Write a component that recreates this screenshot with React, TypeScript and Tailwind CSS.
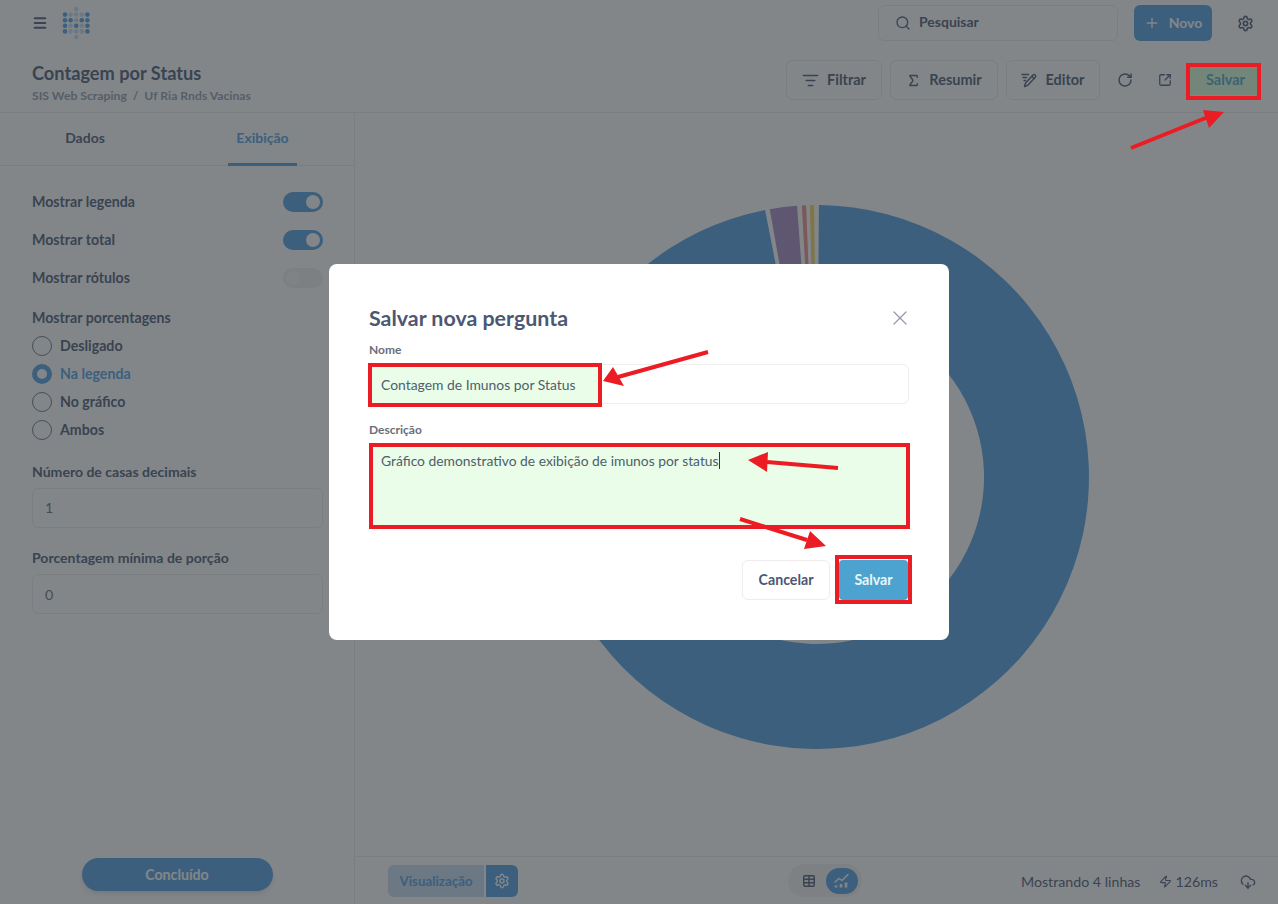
import { CloudDownload, ListFilter, Menu, Plus, RotateCw, Search, Settings, Sigma, SquareArrowOutUpRight, Table, X, Zap } from 'lucide-react';

const LOGO_DOTS = [
  '..o..',
  '#ooo#',
  '##o##',
  '#o#o#',
  '#ooo#',
  '..o..',
];

function Logo() {
  return (
    <svg width="28" height="34" viewBox="0 0 28 34">
      {LOGO_DOTS.map((row, y) =>
        row.split('').map((c, x) =>
          c === '.' ? null : (
            <circle key={`${x}-${y}`} cx={3 + x * 5.6} cy={3 + y * 5.6} r="2.3" fill={c === '#' ? '#509ee3' : '#c9dff3'} />
          )
        )
      )}
    </svg>
  );
}

function EditorIcon() {
  return (
    <svg width="16" height="16" viewBox="0 0 16 16" fill="none" stroke="currentColor" strokeWidth="1.4" strokeLinecap="round" strokeLinejoin="round">
      <path d="M1 2.5h6.5M2 5.5h3.5M3 8.5h1.5" />
      <path d="M3.5 14.5l1-3.5 7.5-8a1.6 1.6 0 0 1 2.3 2.2l-7.5 8z" />
      <path d="M10.8 4.3l2.2 2.2" />
    </svg>
  );
}

function ChartIcon() {
  return (
    <svg width="16" height="16" viewBox="0 0 16 16" fill="none" stroke="currentColor">
      <path d="M1 9l4-3.5 3 2 6-6" strokeWidth="1.5" strokeLinecap="round" strokeLinejoin="round" />
      <path d="M2 14.5v-2M7 14.5v-3.5M12 14.5v-5" strokeWidth="2.6" />
    </svg>
  );
}

// anel do donut, angulos em graus a partir do topo
function sector(a0: number, a1: number, r0: number, r1: number) {
  const pt = (a: number, r: number) => {
    const t = (a * Math.PI) / 180;
    return `${(r * Math.sin(t)).toFixed(2)} ${(-r * Math.cos(t)).toFixed(2)}`;
  };
  const large = a1 - a0 > 180 ? 1 : 0;
  return `M${pt(a0, r1)}A${r1} ${r1} 0 ${large} 1 ${pt(a1, r1)}L${pt(a1, r0)}A${r0} ${r0} 0 ${large} 0 ${pt(a0, r0)}Z`;
}

function Donut() {
  return (
    <svg width="546" height="546" viewBox="-273 -273 546 546">
      <path d={sector(0.4, 349, 167, 272)} fill="#509ee3" />
      <path d={sector(350, 355.8, 167, 272)} fill="#a989c5" />
      <path d={sector(356.8, 357.7, 167, 272)} fill="#ef8c8c" />
      <path d={sector(358.5, 359.4, 167, 272)} fill="#f9d45c" />
    </svg>
  );
}

function Toggle({ on }: { on: boolean }) {
  return (
    <div className={`flex items-center w-10 h-5 rounded-full px-[3px] ${on ? 'bg-[#509ee3] justify-end' : 'bg-[#f0f0f0] justify-start'}`}>
      <div className={`w-[14px] h-[14px] rounded-full ${on ? 'bg-white' : 'bg-[#f7f7f7]'}`} />
    </div>
  );
}

function Radio({ label, checked }: { label: string; checked?: boolean }) {
  return (
    <div className="flex items-center h-7 gap-2">
      <div className={`w-5 h-5 rounded-full bg-white ${checked ? 'border-[5px] border-[#509ee3]' : 'border border-[#6b7285]'}`} />
      <span className={`text-[14.2px] font-bold ${checked ? 'text-[#509ee3]' : 'text-[#4c5773]'}`}>{label}</span>
    </div>
  );
}

function ToolButton({ icon, label, width }: { icon: React.ReactNode; label: string; width: string }) {
  return (
    <button className={`flex items-center justify-center gap-2 h-10 border border-[#eeecec] rounded-md text-[14.5px] font-bold text-[#4c5773] ${width}`}>
      {icon}
      {label}
    </button>
  );
}

function Arrow({ tail, neck, wingA, tip, wingB }: { tail: string; neck: string; wingA: string; tip: string; wingB: string }) {
  return (
    <>
      <polyline points={`${tail} ${neck}`} stroke="#ec1c24" strokeWidth="4" fill="none" />
      <polygon points={`${wingA} ${tip} ${wingB}`} fill="#ec1c24" />
    </>
  );
}

export default function App() {
  return (
    <div className="relative w-[1278px] h-[904px] overflow-hidden bg-white font-['Lato',sans-serif] text-[#4c5773]">
      {/* pagina por baixo do modal */}
      <div className="flex flex-col h-full">
        <div className="flex items-center h-[46px] shrink-0 pl-8 pr-[24px]">
          <Menu size={16} strokeWidth={3} />
          <div className="ml-[14px]">
            <Logo />
          </div>
          <div className="ml-auto flex items-center w-[240px] h-9 border border-[#eeecec] rounded-md pl-4 gap-2 text-sm font-bold">
            <Search size={16} />
            <span className="-mt-[2px]">Pesquisar</span>
          </div>
          <div className="ml-4 flex items-center justify-center gap-[9px] w-[78px] h-9 rounded-md bg-[#509ee3] text-white text-sm font-bold">
            <Plus size={16} />
            Novo
          </div>
          <div className="ml-[25px]">
            <Settings size={17} strokeWidth={2.3} />
          </div>
        </div>

        <div className="flex items-start h-[67px] shrink-0 border-b border-[#eeecec] pl-8 pr-[21px]">
          <div className="pt-[15px]">
            <div className="text-[18.2px] leading-6 font-bold">Contagem por Status</div>
            <div className="mt-[3px] text-[12.2px] leading-4 font-bold text-[#949aab]">SIS Web Scraping&nbsp; /&nbsp; Uf Ria Rnds Vacinas</div>
          </div>
          <div className="ml-auto flex items-center pt-[14px]">
            <ToolButton icon={<ListFilter size={17} strokeWidth={2.2} />} label="Filtrar" width="w-[96px]" />
            <div className="w-2" />
            <ToolButton icon={<Sigma size={15} strokeWidth={2.2} />} label="Resumir" width="w-[108px]" />
            <div className="w-2" />
            <ToolButton icon={<EditorIcon />} label="Editor" width="w-[94px]" />
            <div className="ml-[17px]">
              <RotateCw size={16} strokeWidth={2.2} />
            </div>
            <div className="ml-[25px]">
              <SquareArrowOutUpRight size={14} strokeWidth={2.2} />
            </div>
            <div className="ml-[18px] flex items-center justify-center w-[67px] h-[30px] pl-1 bg-[#dcffd8] text-[14.5px] font-bold text-[#4fa8c8]">Salvar</div>
          </div>
        </div>

        <div className="flex flex-1 min-h-0">
          <aside className="flex flex-col w-[355px] border-r border-[#eeecec]">
            <div className="flex h-[53px] shrink-0 border-b border-[#eeecec] text-sm font-bold">
              <div className="w-[170px] h-[50px] flex items-center justify-center">Dados</div>
              <div className="ml-[58px] w-[69px] h-[53px] flex items-center justify-center border-b-[3px] border-[#509ee3] text-[#509ee3]">Exibição</div>
            </div>
            <div className="flex flex-col flex-1 px-8 pt-[17px] pr-[31px] text-[14.2px] font-bold">
              <div className="flex items-center justify-between h-[38px]">
                Mostrar legenda
                <Toggle on />
              </div>
              <div className="flex items-center justify-between h-[38px]">
                Mostrar total
                <Toggle on />
              </div>
              <div className="flex items-center justify-between h-[38px]">
                Mostrar rótulos
                <Toggle on={false} />
              </div>
              <div className="mt-[11px] h-5 leading-5">Mostrar porcentagens</div>
              <div className="mt-1">
                <Radio label="Desligado" />
                <Radio label="Na legenda" checked />
                <Radio label="No gráfico" />
                <Radio label="Ambos" />
              </div>
              <div className="mt-[18px] h-5 leading-5 text-[14.05px]">Número de casas decimais</div>
              <div className="mt-[6px] flex items-center h-10 border border-[#eeecec] rounded-md px-3 font-normal text-[#696e7b]">1</div>
              <div className="mt-5 h-5 leading-5 text-[14.05px]">Porcentagem mínima de porção</div>
              <div className="mt-[6px] flex items-center h-10 border border-[#eeecec] rounded-md px-3 pt-[2px] font-normal text-[#696e7b]">0</div>
              <div className="mt-auto mb-[13px] self-center flex items-center justify-center w-[191px] h-[33px] rounded-full bg-[#509ee3] text-white shadow-md -ml-px">Concluído</div>
            </div>
          </aside>

          <main className="flex flex-col flex-1 min-w-0">
            <div className="flex flex-1 justify-center pt-[91px]">
              <Donut />
            </div>
            <div className="grid grid-cols-[433px_74px_1fr] items-center h-[48px] shrink-0 border-t border-[#eeecec]">
              <div className="flex items-center pl-[33px] gap-[2px]">
                <div className="flex items-center justify-center w-[96px] h-8 rounded-l-md bg-[#c9dcef] pt-[2px] text-[13.3px] font-bold text-[#509ee3]">Visualização</div>
                <div className="flex items-center justify-center w-8 h-8 rounded-r-md bg-[#509ee3] text-white">
                  <Settings size={16} strokeWidth={2.2} />
                </div>
              </div>
              <div className="flex items-center h-[33px] rounded-full bg-[#f3f3f3] pl-[14px] pr-[4px] justify-between">
                <Table size={14} strokeWidth={2.5} />
                <div className="flex items-center justify-center w-8 h-[26px] rounded-full bg-[#509ee3] text-white">
                  <ChartIcon />
                </div>
              </div>
              <div className="flex items-center justify-end pr-[22px] pt-[3px] text-[14.2px] text-[#4c5773]">
                Mostrando 4 linhas
                <Zap size={13} className="ml-[18px]" />
                <span className="ml-1">126ms</span>
                <CloudDownload size={16} className="ml-[22px]" />
              </div>
            </div>
          </main>
        </div>
      </div>

      {/* modal */}
      <div className="absolute inset-0 flex items-center justify-center bg-[rgba(46,53,59,0.6)]">
        <div className="w-[620px] h-[376px] bg-white rounded-lg px-10 pt-10">
          <div className="flex items-center justify-between h-7">
            <div className="text-[21.4px] font-bold text-[#4c5773]">Salvar nova pergunta</div>
            <X size={24} strokeWidth={1.2} className="text-[#949aab] -mr-[3px]" />
          </div>
          <div className="mt-[11px] text-xs leading-[14px] font-bold text-[#696e7b]">Nome</div>
          <div className="relative mt-[7px] h-10 w-[540px] border border-[#eeecec] rounded-md">
            <div className="absolute -left-[2px] -top-[2px] flex items-center w-[234px] h-[44px] border-4 border-[#ec1c24] bg-[#eafde8] pl-[9px] text-[13.9px] text-[#4d5f6b]">Contagem de Imunos por Status</div>
          </div>
          <div className="mt-[19px] text-xs leading-[14px] font-bold text-[#696e7b]">Descrição</div>
          <div className="mt-[6px] h-[86px] w-[541px] border-4 border-[#ec1c24] bg-[#eafde8] pl-2 pt-[5px] text-[13.85px] leading-[18px] text-[#4d5f6b]">
            Gráfico demonstrativo de exibição de imunos por status
            <span className="inline-block w-px h-[17px] bg-[#2e353b] align-text-bottom" />
          </div>
          <div className="flex justify-end items-center gap-[9px] mt-[31px] pr-px">
            <button className="w-[88px] h-10 border border-[#eeecec] rounded-md text-[14.2px] font-bold text-[#4c5773]">Cancelar</button>
            <div className="relative w-[69px] h-10 rounded bg-[#4da3d0] flex items-center justify-center text-[14.2px] font-bold text-[#e8f7f6]">
              Salvar
              <div className="absolute -left-1 -top-[5px] w-[77px] h-[49px] border-4 border-[#ec1c24]" />
            </div>
          </div>
        </div>
      </div>

      {/* marcacoes vermelhas em cima do print */}
      <div className="absolute left-[1186px] top-[63px] w-[75px] h-[37px] border-4 border-[#ec1c24]" />
      <svg className="absolute inset-0 pointer-events-none" width="1278" height="904">
        <Arrow tail="1131,148" neck="1208,117" wingA="1203,110" tip="1224,112" wingB="1209,128" />
        <Arrow tail="708,352" neck="618,377" wingA="613,367" tip="603,381" wingB="624,386" />
        <Arrow tail="838,468" neck="767,462" wingA="768,452" tip="748,460" wingB="767,472" />
        <Arrow tail="740,519" neck="807,540" wingA="810,531" tip="826,546" wingB="804,549" />
      </svg>
    </div>
  );
}
